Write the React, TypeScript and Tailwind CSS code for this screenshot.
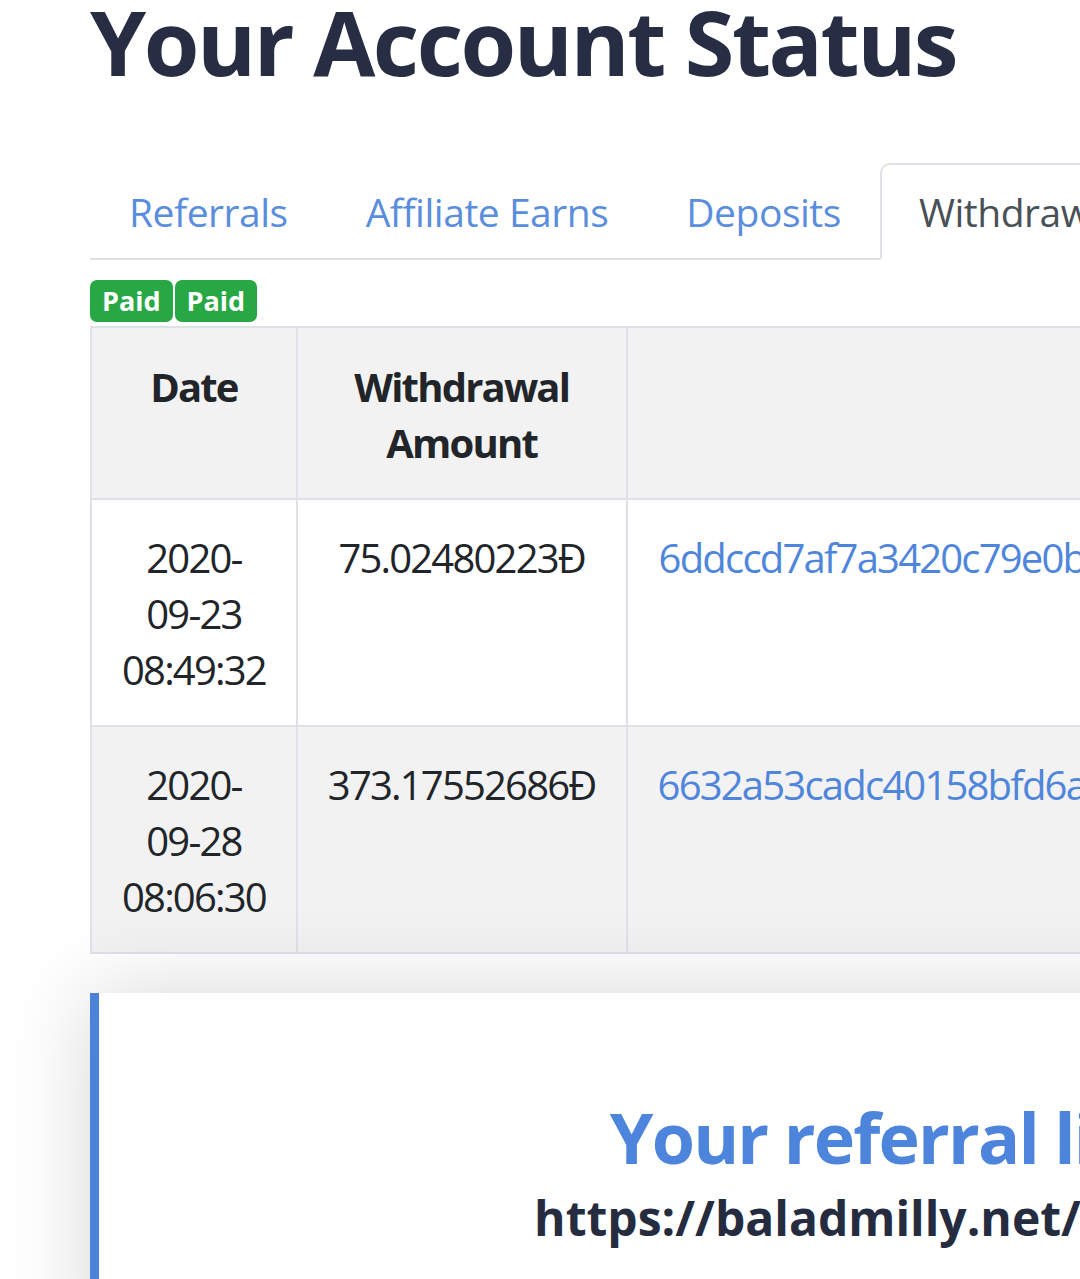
import React from "react";

const rows = [
  {
    date: ["2020-", "09-23", "08:49:32"],
    amount: "75.02480223Đ",
    tx: "6ddccd7af7a3420c79e0b5d41f2a8c93e7b06d1f4a5c28e9b3d70f6a1c84e2b5",
  },
  {
    date: ["2020-", "09-28", "08:06:30"],
    amount: "373.17552686Đ",
    tx: "6632a53cadc40158bfd6a9e27c4b13f85d0e6a72b9c41d3f8e05a6b2c79d4e1f",
  },
];

const tabs = ["Referrals", "Affiliate Earns", "Deposits", "Withdrawals"];

const cell = "border-2 border-[#dee2e6] px-[30px] pt-[30px] pb-[27px] text-center align-top";
const head = "border-2 border-[#dee2e6] px-[30px] pt-[31px] pb-[27px] align-top font-bold";

export default function App() {
  return (
    <div className="h-[1279px] w-[1080px] overflow-hidden bg-white font-['Open_Sans',sans-serif] tracking-[-0.03em]">
      <div className="w-[2200px] pl-[90px]">
        <h1 className="-mt-[13px] text-[90px] leading-[1.2] font-bold tracking-[-0.027em] text-[#272e44]">
          Your Account Status
        </h1>

        <ul className="mt-[68px] flex border-b-2 border-[#dee2e6]">
          {tabs.map((t, i) => (
            <li key={t} className="-mb-[2px]">
              <a
                className={
                  i === 3
                    ? "block rounded-t-[10px] border-2 border-[#dee2e6] border-b-white bg-white px-[37px] py-5 text-[39px] leading-[53px] text-[#495057]"
                    : "block border-2 border-transparent px-[37px] py-5 text-[39px] leading-[53px] text-[#5a8edc]"
                }
              >
                {t}
              </a>
            </li>
          ))}
        </ul>

        <div className="mt-5 flex gap-[2px] tracking-normal">
          {[0, 1].map((i) => (
            <span
              key={i}
              className="rounded-[7px] bg-[#28a745] px-[12px] text-[27px] leading-[42px] font-bold text-white"
            >
              Paid
            </span>
          ))}
        </div>

        <table className="mt-1 border-collapse border-2 border-[#dee2e6] text-[40px] leading-[56px] tracking-[-0.045em] text-[#212529]">
          <thead>
            <tr className="bg-[#f2f2f2]">
              <th className={head}>Date</th>
              <th className={head}>
                Withdrawal
                <br />
                Amount
              </th>
              <th className={head}>Transaction ID</th>
              <th className={head}>Status</th>
            </tr>
          </thead>
          <tbody>
            {rows.map((r, i) => (
              <tr key={r.tx} className={i % 2 === 1 ? "bg-[#f2f2f2]" : "bg-white"}>
                <td className={cell}>
                  {r.date.map((d) => (
                    <div key={d}>{d}</div>
                  ))}
                </td>
                <td className={cell}>{r.amount}</td>
                <td className={cell}>
                  <a className="text-[#4f86db]">{r.tx}</a>
                </td>
                <td className={cell} />
              </tr>
            ))}
          </tbody>
        </table>

        <div className="mt-[39px] w-[1600px] border-l-[9px] border-[#4d82db] bg-white pt-[102px] pb-[120px] text-center shadow-[0_0_80px_rgba(0,0,0,0.16)]">
          <h2 className="text-[70px] leading-[1.2] font-bold tracking-[-0.026em] text-[#4d84dc]">
            Your referral link
          </h2>
          <p className="mt-[10px] text-[48px] leading-[1.2] font-bold tracking-normal text-[#252c40]">
            https://baladmilly.net/?ref=58
          </p>
        </div>
      </div>
    </div>
  );
}
